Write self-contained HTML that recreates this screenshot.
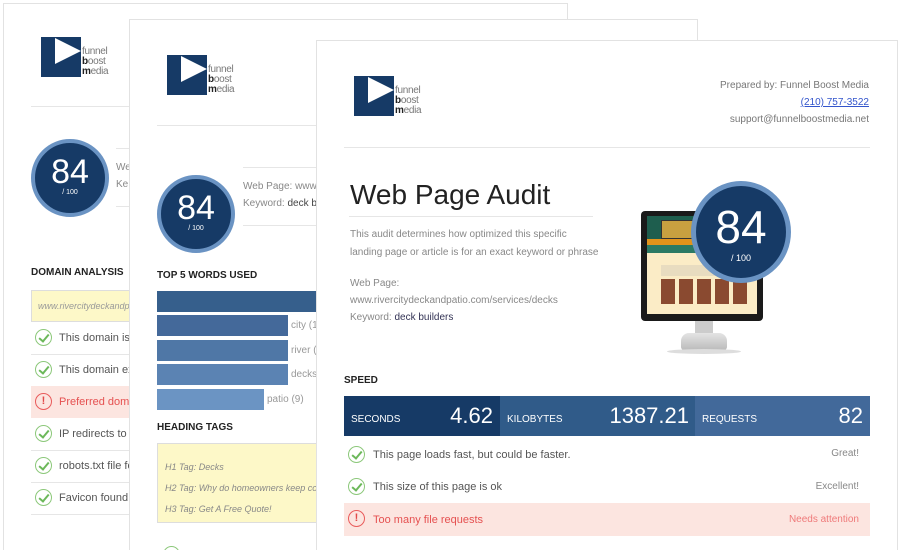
<!DOCTYPE html>
<html style="height:550px;overflow:hidden"><head><meta charset="utf-8"><style>
*{margin:0;padding:0;box-sizing:border-box}
body{width:900px;height:550px;overflow:hidden;background:#fff;font-family:"Liberation Sans",sans-serif;position:relative;color:#555}
.pg{position:absolute;background:#fff;border:1px solid #e2e2e2;border-bottom:none;overflow:hidden}
.a{position:absolute;white-space:nowrap}
.logo{position:absolute;width:40px;height:40px;background:#163a66}
.logo svg{position:absolute;left:0;top:0}
.lt{position:absolute;left:41px;top:10px;font-size:10px;line-height:10px;color:#777;letter-spacing:-.3px}
.lt b{color:#222;font-weight:bold}
.circ{position:absolute;border-radius:50%;background:#163a66;border:4px solid #6a93c3;color:#fff;text-align:center}
.hr{position:absolute;height:1px;background:#e6e6e6}
.h{position:absolute;font-size:10px;font-weight:bold;color:#222;white-space:nowrap}
.ck{position:absolute;width:17px;height:17px;border:1.5px solid #8cc87a;border-radius:50%}
.ck:after{content:"";position:absolute;left:5px;top:2px;width:4px;height:8px;border:solid #6cb85a;border-width:0 2px 2px 0;transform:rotate(40deg)}
.ex{position:absolute;width:17px;height:17px;border:1.5px solid #e95b5b;border-radius:50%;color:#e24a4a;font-size:11px;font-weight:bold;text-align:center;line-height:14px}
.row{position:absolute;font-size:11px;color:#555;white-space:nowrap}
</style></head><body>

<!-- page 1 -->
<div class="pg" style="left:3px;top:3px;width:565px;height:547px">
 <div class="logo" style="left:37px;top:33px"><svg width="40" height="40"><polygon points="14,1 14,27 40,14" fill="#fff"/></svg><div class="lt">f<span>unnel</span><br><b>b</b>oost<br><b>m</b>edia</div></div>
 <div class="hr" style="left:27px;top:102px;width:200px"></div>
 <div class="circ" style="left:27px;top:135px;width:78px;height:78px"><div style="font-size:34px;line-height:34px;margin-top:12px">84</div><div style="font-size:7px">/ 100</div></div>
 <div class="hr" style="left:112px;top:144px;width:100px"></div>
 <div class="a" style="left:112px;top:158px;font-size:10px;color:#888">We</div>
 <div class="a" style="left:112px;top:175px;font-size:10px;color:#888">Ke</div>
 <div class="hr" style="left:112px;top:202px;width:100px"></div>
 <div class="h" style="left:27px;top:263px">DOMAIN ANALYSIS</div>
 <div class="a" style="left:27px;top:286px;width:200px;height:32px;background:#fdf8c8;border:1px solid #ddd;font-size:9px;font-style:italic;color:#999;padding:10px 6px">www.rivercitydeckandpatio.com</div>
 <div class="ck" style="left:31px;top:325px"></div><div class="row" style="left:55px;top:328px">This domain is 2</div>
 <div class="hr" style="left:27px;top:350px;width:200px"></div>
 <div class="ck" style="left:31px;top:357px"></div><div class="row" style="left:55px;top:360px">This domain exp</div>
 <div class="a" style="left:27px;top:382px;width:200px;height:32px;background:#fce5e0"></div>
 <div class="ex" style="left:31px;top:389px">!</div><div class="row" style="left:55px;top:392px;color:#e55050">Preferred doma</div>
 <div class="ck" style="left:31px;top:421px"></div><div class="row" style="left:55px;top:424px">IP redirects to yo</div>
 <div class="hr" style="left:27px;top:446px;width:200px"></div>
 <div class="ck" style="left:31px;top:453px"></div><div class="row" style="left:55px;top:456px">robots.txt file fo</div>
 <div class="hr" style="left:27px;top:478px;width:200px"></div>
 <div class="ck" style="left:31px;top:485px"></div><div class="row" style="left:55px;top:488px">Favicon found</div>
 <div class="hr" style="left:27px;top:510px;width:200px"></div>
</div>

<!-- page 2 -->
<div class="pg" style="left:129px;top:19px;width:569px;height:531px">
 <div class="logo" style="left:37px;top:35px"><svg width="40" height="40"><polygon points="14,1 14,27 40,14" fill="#fff"/></svg><div class="lt">f<span>unnel</span><br><b>b</b>oost<br><b>m</b>edia</div></div>
 <div class="hr" style="left:27px;top:105px;width:200px"></div>
 <div class="circ" style="left:27px;top:155px;width:78px;height:78px"><div style="font-size:34px;line-height:34px;margin-top:12px">84</div><div style="font-size:7px">/ 100</div></div>
 <div class="hr" style="left:113px;top:147px;width:100px"></div>
 <div class="a" style="left:113px;top:161px;font-size:10px;color:#888">Web Page: www.r</div>
 <div class="a" style="left:113px;top:178px;font-size:10px;color:#888">Keyword: <span style="color:#444">deck builders</span></div>
 <div class="hr" style="left:113px;top:205px;width:100px"></div>
 <div class="h" style="left:27px;top:250px">TOP 5 WORDS USED</div>
 <div class="a" style="left:27px;top:271px;width:180px;height:21px;background:#365f8c"></div>
 <div class="a" style="left:27px;top:295px;width:131px;height:21px;background:#44699a"></div><div class="row" style="left:161px;top:300px;color:#999;font-size:10px">city (1</div>
 <div class="a" style="left:27px;top:320px;width:131px;height:21px;background:#4f77a6"></div><div class="row" style="left:161px;top:325px;color:#999;font-size:10px">river (</div>
 <div class="a" style="left:27px;top:344px;width:131px;height:21px;background:#5b83b3"></div><div class="row" style="left:161px;top:349px;color:#999;font-size:10px">decks</div>
 <div class="a" style="left:27px;top:369px;width:107px;height:21px;background:#6b94c3"></div><div class="row" style="left:137px;top:374px;color:#999;font-size:10px">patio (9)</div>
 <div class="h" style="left:27px;top:402px">HEADING TAGS</div>
 <div class="a" style="left:27px;top:423px;width:200px;height:80px;background:#fdf8c8;border:1px solid #ddd;font-size:9px;font-style:italic;color:#888;padding:13px 7px;line-height:21px">H1 Tag: Decks<br>H2 Tag: Why do homeowners keep coming<br>H3 Tag: Get A Free Quote!</div>
 <div class="ck" style="left:33px;top:526px"></div>
</div>

<!-- page 3 -->
<div class="pg" style="left:316px;top:40px;width:582px;height:510px">
 <div class="logo" style="left:37px;top:35px"><svg width="40" height="40"><polygon points="14,1 14,27 40,14" fill="#fff"/></svg><div class="lt">f<span>unnel</span><br><b>b</b>oost<br><b>m</b>edia</div></div>
 <div class="a" style="right:28px;top:36px;font-size:10px;color:#777;text-align:right;line-height:17px">Prepared by: Funnel Boost Media<br><span style="color:#3355cc;text-decoration:underline">(210) 757-3522</span><br>support@funnelboostmedia.net</div>
 <div class="hr" style="left:27px;top:106px;width:526px"></div>
 <div class="a" style="left:33px;top:138px;font-size:28px;color:#222">Web Page Audit</div>
 <div class="hr" style="left:32px;top:175px;width:244px"></div>
 <div class="a" style="left:33px;top:185px;font-size:10px;color:#888;line-height:18px">This audit determines how optimized this specific<br>landing page or article is for an exact keyword or phrase</div>
 <div class="a" style="left:33px;top:234px;font-size:10px;color:#888;line-height:17px">Web Page:<br>www.rivercitydeckandpatio.com/services/decks<br>Keyword: <span style="color:#335">deck builders</span></div>
 <div class="a" style="left:324px;top:170px;width:122px;height:110px;background:#1a1a1a;border-radius:4px"></div>
 <div class="a" style="left:330px;top:175px;width:110px;height:98px;background:#fbecc6;overflow:hidden">
  <div style="height:23px;background:#1e5e4e"></div>
  <div style="position:absolute;left:14px;top:4px;width:35px;height:19px;background:#c8a040;border:1px solid #333"></div>
  <div style="height:6px;background:#e1931b"></div>
  <div style="height:8px;background:#2b7a64"></div>
  <div style="position:absolute;left:14px;top:49px;width:85px;height:11px;background:#e8dcc0"></div>
  <div style="position:absolute;left:14px;top:63px;width:88px;height:25px;background:repeating-linear-gradient(90deg,#8a4a30 0 14px,#fbecc6 14px 18px)"></div>
 </div>
 <div class="a" style="left:378px;top:280px;width:18px;height:15px;background:#ccc"></div>
 <div class="a" style="left:364px;top:292px;width:46px;height:17px;background:linear-gradient(#e4e4e4,#bbb);border-radius:8px 8px 3px 3px"></div>
 <div class="a" style="left:350px;top:308px;width:74px;height:5px;background:#ddd;border-radius:50%"></div>
 <div class="circ" style="left:374px;top:140px;width:100px;height:102px;border-width:5px"><div style="font-size:46px;line-height:46px;margin-top:18px">84</div><div style="font-size:9px;margin-top:3px">/ 100</div></div>
 <div class="h" style="left:27px;top:334px">SPEED</div>
 <div class="a" style="left:27px;top:355px;width:526px;height:40px;background:#42699a"></div>
 <div class="a" style="left:27px;top:355px;width:156px;height:40px;background:#163a66"></div>
 <div class="a" style="left:183px;top:355px;width:195px;height:40px;background:#305b89"></div>
 <div class="a" style="left:34px;top:373px;font-size:10px;color:#fff">SECONDS</div>
 <div class="a" style="left:120px;top:362px;font-size:22px;color:#fff;width:56px;text-align:right">4.62</div>
 <div class="a" style="left:190px;top:373px;font-size:10px;color:#fff">KILOBYTES</div>
 <div class="a" style="left:260px;top:362px;font-size:22px;color:#fff;width:112px;text-align:right">1387.21</div>
 <div class="a" style="left:385px;top:373px;font-size:10px;color:#fff">REQUESTS</div>
 <div class="a" style="left:460px;top:362px;font-size:22px;color:#fff;width:86px;text-align:right">82</div>
 <div class="ck" style="left:31px;top:405px"></div><div class="row" style="left:56px;top:408px">This page loads fast, but could be faster.</div><div class="row" style="right:38px;top:407px;color:#888;font-size:10px">Great!</div>
 <div class="ck" style="left:31px;top:437px"></div><div class="row" style="left:56px;top:440px">This size of this page is ok</div><div class="row" style="right:38px;top:440px;color:#888;font-size:10px">Excellent!</div>
 <div class="a" style="left:27px;top:462px;width:526px;height:33px;background:#fce5e0"></div>
 <div class="ex" style="left:31px;top:469px">!</div><div class="row" style="left:56px;top:473px;color:#e55050">Too many file requests</div><div class="row" style="right:38px;top:473px;color:#ef7a7a;font-size:10px">Needs attention</div>
</div>
</body></html>
